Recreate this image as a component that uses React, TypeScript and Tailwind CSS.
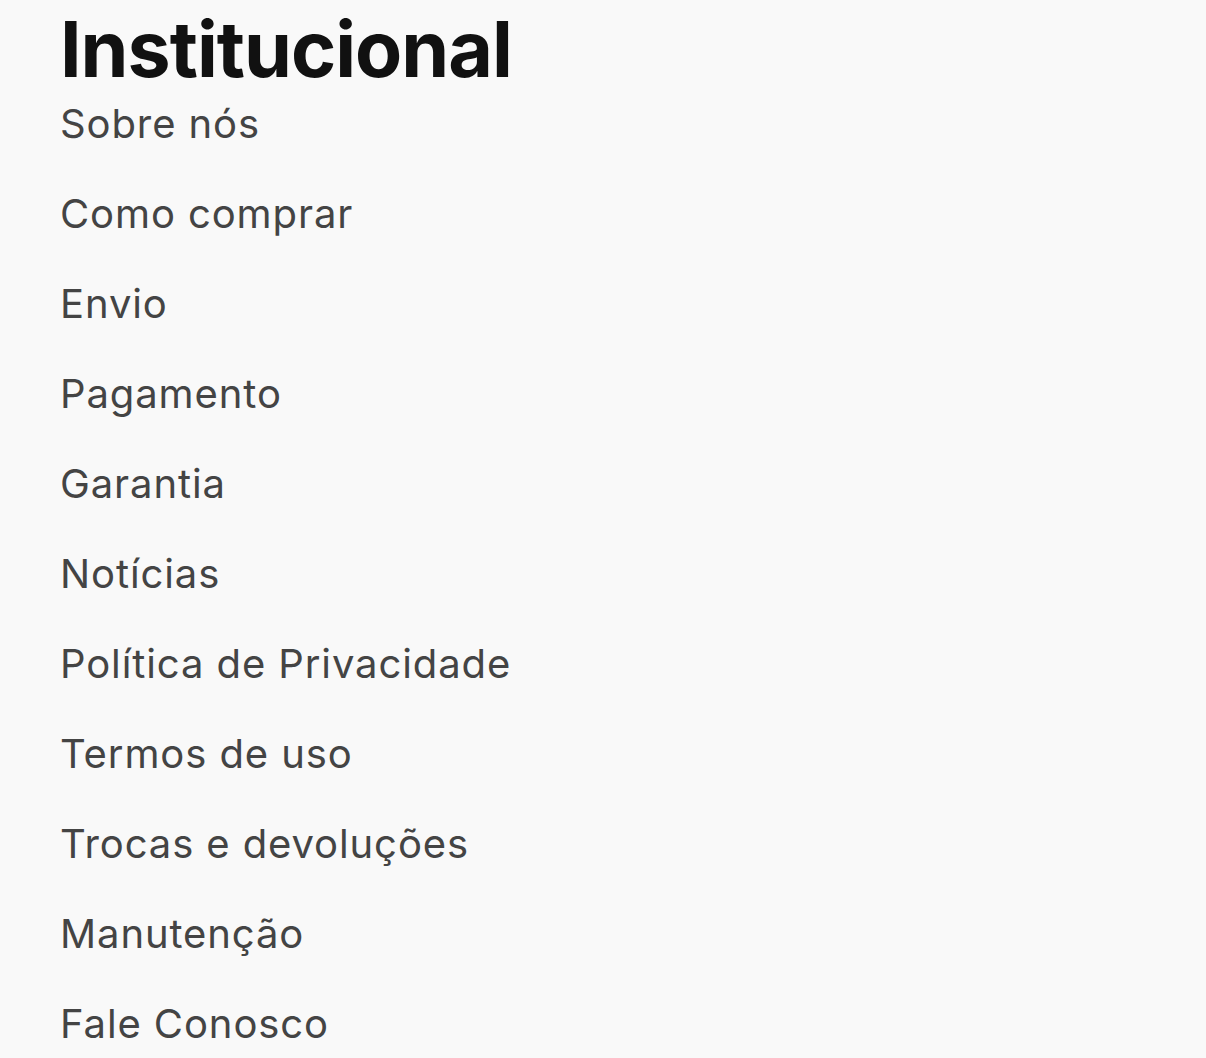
const links = [
  "Sobre nós",
  "Como comprar",
  "Envio",
  "Pagamento",
  "Garantia",
  "Notícias",
  "Política de Privacidade",
  "Termos de uso",
  "Trocas e devoluções",
  "Manutenção",
  "Fale Conosco",
];

export default function App() {
  return (
    <div className="h-[1058px] w-[1206px] overflow-hidden bg-[#f9f9f9] font-['Inter',sans-serif]">
      <div className="flex flex-col px-[60px]">
        <h2 className="mt-[1px] text-[77px] font-bold leading-[96px] tracking-[-1px] text-[#111111]">
          Institucional
        </h2>
        <ul className="-mt-[18px] flex flex-col">
          {links.map((label) => (
            <li key={label}>
              <a
                href="#"
                className="block text-[40px] leading-[90px] tracking-[0.9px] text-[#444444]"
              >
                {label}
              </a>
            </li>
          ))}
        </ul>
      </div>
    </div>
  );
}
